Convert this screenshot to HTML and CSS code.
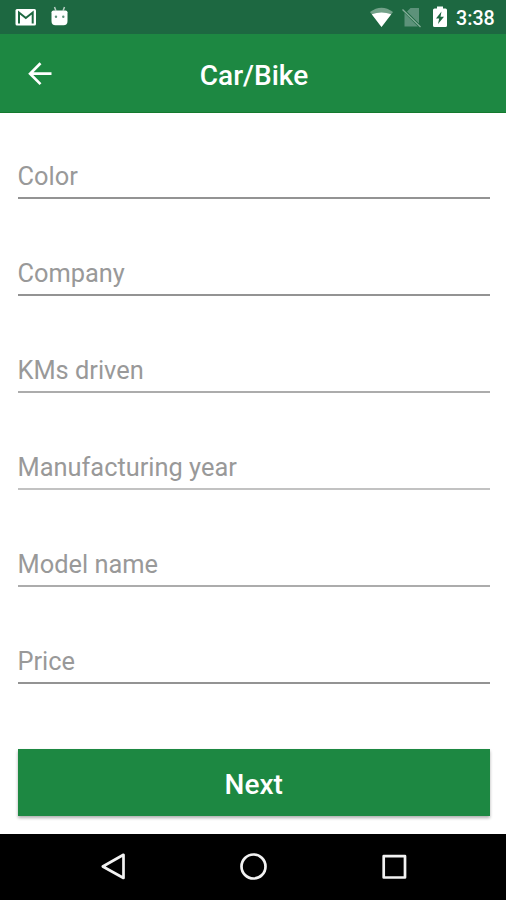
FILE: index.html
```html
<!DOCTYPE html>
<html lang="en">
<head>
<meta charset="utf-8">
<title>Car/Bike</title>
<link rel="stylesheet" href="styles.css">
</head>
<body>
<div class="screen">
  <div class="status">
    <svg class="status-left" width="80" height="34" viewBox="0 0 80 34" aria-hidden="true">
      <rect x="15.5" y="9" width="20.5" height="16.5" rx="1.5" fill="#fff"/>
      <path d="M19 23.5V12.5L25.8 18L32.7 12.5V23.5" fill="none" stroke="#1d6841" stroke-width="2"/>
      <path d="M51.500 12.300Q51.500 10.500 53.500 10.500H65.500Q67.500 10.500 67.500 12.300V21Q67.500 25.300 63.500 25.300H55.500Q51.500 25.300 51.500 21Z" fill="#fff"/>
      <path d="M54.500 7L56 11M64.500 7L63 11" stroke="#b9d0c4" stroke-width="1.500"/>
      <circle cx="56" cy="16.800" r="1.200" fill="#5d927a"/>
      <circle cx="63.300" cy="16.800" r="1.200" fill="#5d927a"/>
    </svg>
    <div class="status-right">
      <svg width="84" height="34" viewBox="366 0 84 34" aria-hidden="true">
        <path d="M370 12Q381.500 3.500 393 12L381.500 27Z" fill="#fff" opacity=".38"/>
        <path d="M371.800 14.200Q381.500 11 391.200 14.200L381.500 27Z" fill="#fff"/>
        <path d="M407 11.500L410.500 8H419V23.500ZM404.500 13L418 26.500H404.500Z" fill="#5d927a"/>
        <path d="M402.500 9.500L420.500 27" stroke="#86ae9a" stroke-width="1.300"/>
        <path d="M433 10Q433 8.500 434.500 8.500H437V6.500H443V8.500H445.500Q447 8.500 447 10V25.500Q447 27 445.500 27H434.500Q433 27 433 25.500Z" fill="#fff"/>
        <path d="M441.500 11.500L436 18.500H439.200L438 24L444 16.800H440.500Z" fill="#1d6841"/>
      </svg>
      <span class="time">3:38</span>
    </div>
  </div>
  <header class="bar">
    <svg class="back" width="30" height="30" viewBox="25 58 30 30" aria-label="Back">
      <path d="M51.500 73.700H30.500M40.500 63.300L30.100 73.700L40.500 84.100" fill="none" stroke="#fff" stroke-width="2.700"/>
    </svg>
    <h1 class="title">Car/Bike</h1>
  </header>
  <main class="form">
    <div class="field"><span>Color</span></div>
    <div class="field"><span>Company</span></div>
    <div class="field lighter"><span>KMs driven</span></div>
    <div class="field soft"><span>Manufacturing year</span></div>
    <div class="field lighter"><span>Model name</span></div>
    <div class="field"><span>Price</span></div>
    <button class="next">Next</button>
  </main>
  <nav class="nav">
    <svg width="506" height="66" viewBox="0 834 506 66" fill="none" stroke="#f2f2f2" stroke-width="2.700" stroke-linejoin="round" aria-hidden="true">
      <path d="M123.500 854.800V878L102.800 866.500Z"/>
      <circle cx="253.500" cy="866.500" r="12"/>
      <rect x="383.700" y="856.200" width="21.300" height="21.300"/>
    </svg>
  </nav>
</div>
</body>
</html>
```
FILE: styles.css
```css
* { box-sizing: border-box; }
body { margin: 0; background: #fff; font-family: Roboto, sans-serif; }
.screen { width: 506px; height: 900px; display: flex; flex-direction: column; overflow: hidden; }
.status { height: 34px; flex: none; background: #1d6841; display: flex; justify-content: space-between; }
.status svg, .nav svg { display: block; }
.status-right { display: flex; width: 140px; }
.time { color: #fff; font-size: 19.7px; font-weight: 500; line-height: 37px; margin-left: 6px; white-space: nowrap; }
.bar { height: 79px; flex: none; background: #1d8842; border-bottom: 1px solid #147a2e; display: grid; grid-template-columns: 55px 1fr 55px; align-items: center; }
.back { margin-left: 25px; }
.title { margin: 6px 0 0; color: #fff; font-size: 28px; line-height: 32px; font-weight: 500; text-align: center; padding-left: 2px; }
.form { height: 720px; flex: none; padding: 0 16px 0 17.5px; margin-top: -11px; display: flex; flex-direction: column; }
.field { height: 97px; flex: none; border-bottom: 2px solid #939393; display: flex; align-items: flex-end; padding-bottom: 6px; font-size: 25.4px; line-height: 30px; color: #999; }
.lighter { border-color: #acacac; }
.soft { border-color: #c2c2c2; }
.next { margin-top: 65px; height: 67px; flex: none; border: 0; background: #1d8842; color: #fff; font: 500 28px/32px Roboto, sans-serif; padding: 5px 0 0; box-shadow: 0 2px 3px rgba(0,0,0,.32); }
.nav { flex: 1; margin-top: 12px; background: #000; }
```
